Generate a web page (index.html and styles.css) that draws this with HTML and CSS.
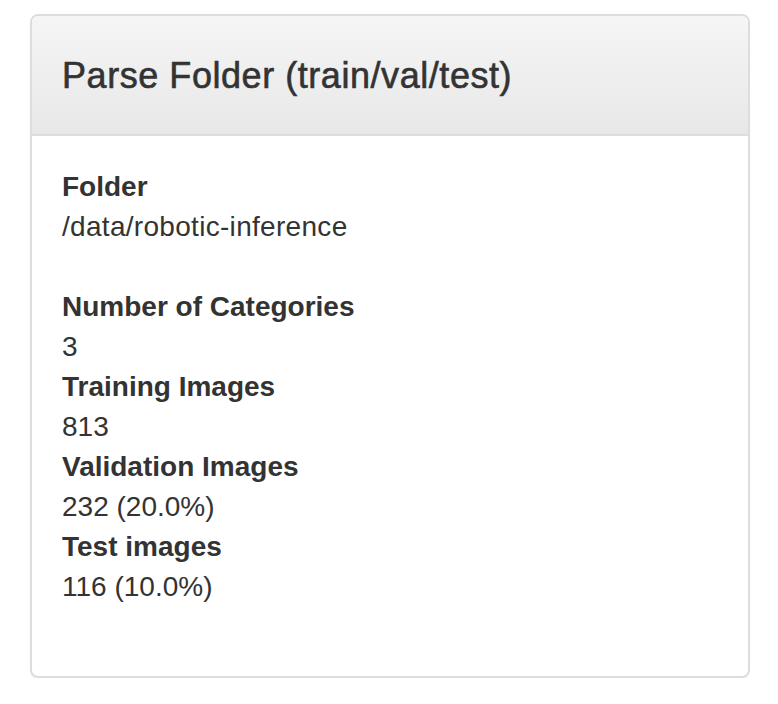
FILE: index.html
```html
<!DOCTYPE html>
<html>
<head>
<meta charset="utf-8">
<link rel="stylesheet" href="styles.css">
</head>
<body>
<div class="panel">
  <div class="panel-heading">
    <h3 class="panel-title">Parse Folder (train/val/test)</h3>
  </div>
  <div class="panel-body">
    <dl class="info">
      <dt>Folder</dt>
      <dd class="path">/data/robotic-inference</dd>
    </dl>
    <dl class="info">
      <dt>Number of Categories</dt>
      <dd>3</dd>
      <dt>Training Images</dt>
      <dd>813</dd>
      <dt>Validation Images</dt>
      <dd>232 (20.0%)</dd>
      <dt>Test images</dt>
      <dd>116 (10.0%)</dd>
    </dl>
  </div>
</div>
</body>
</html>
```
FILE: styles.css
```css
html, body {
  margin: 0;
  padding: 0;
  background: #fff;
}
body {
  font-family: "Liberation Sans", Arial, Helvetica, sans-serif;
  color: #333;
  font-size: 28px;
  line-height: 40px;
}
.panel {
  margin: 14px 0 0 30px;
  width: 720px;
  box-sizing: border-box;
  border: 2px solid #ddd;
  border-radius: 8px;
  background: #fff;
  box-shadow: 0 2px 2px rgba(0,0,0,0.03);
  overflow: hidden;
}
.panel-heading {
  padding: 40px 30px 38px;
  background: linear-gradient(to bottom, #f5f5f5 0%, #e8e8e8 100%);
  border-bottom: 2px solid #ddd;
}
.panel-title {
  margin: 0;
  font-size: 36px;
  line-height: 40px;
  font-weight: 500;
  color: #333;
  letter-spacing: 0.55px;
  -webkit-text-stroke: 0.6px #333;
}
.panel-body {
  padding: 31px 30px 29px;
}
.info {
  margin: 0 0 40px;
}
.info dt {
  font-weight: bold;
}
.info dd {
  margin: 0;
}
.info .path {
  letter-spacing: 0.3px;
}
```
